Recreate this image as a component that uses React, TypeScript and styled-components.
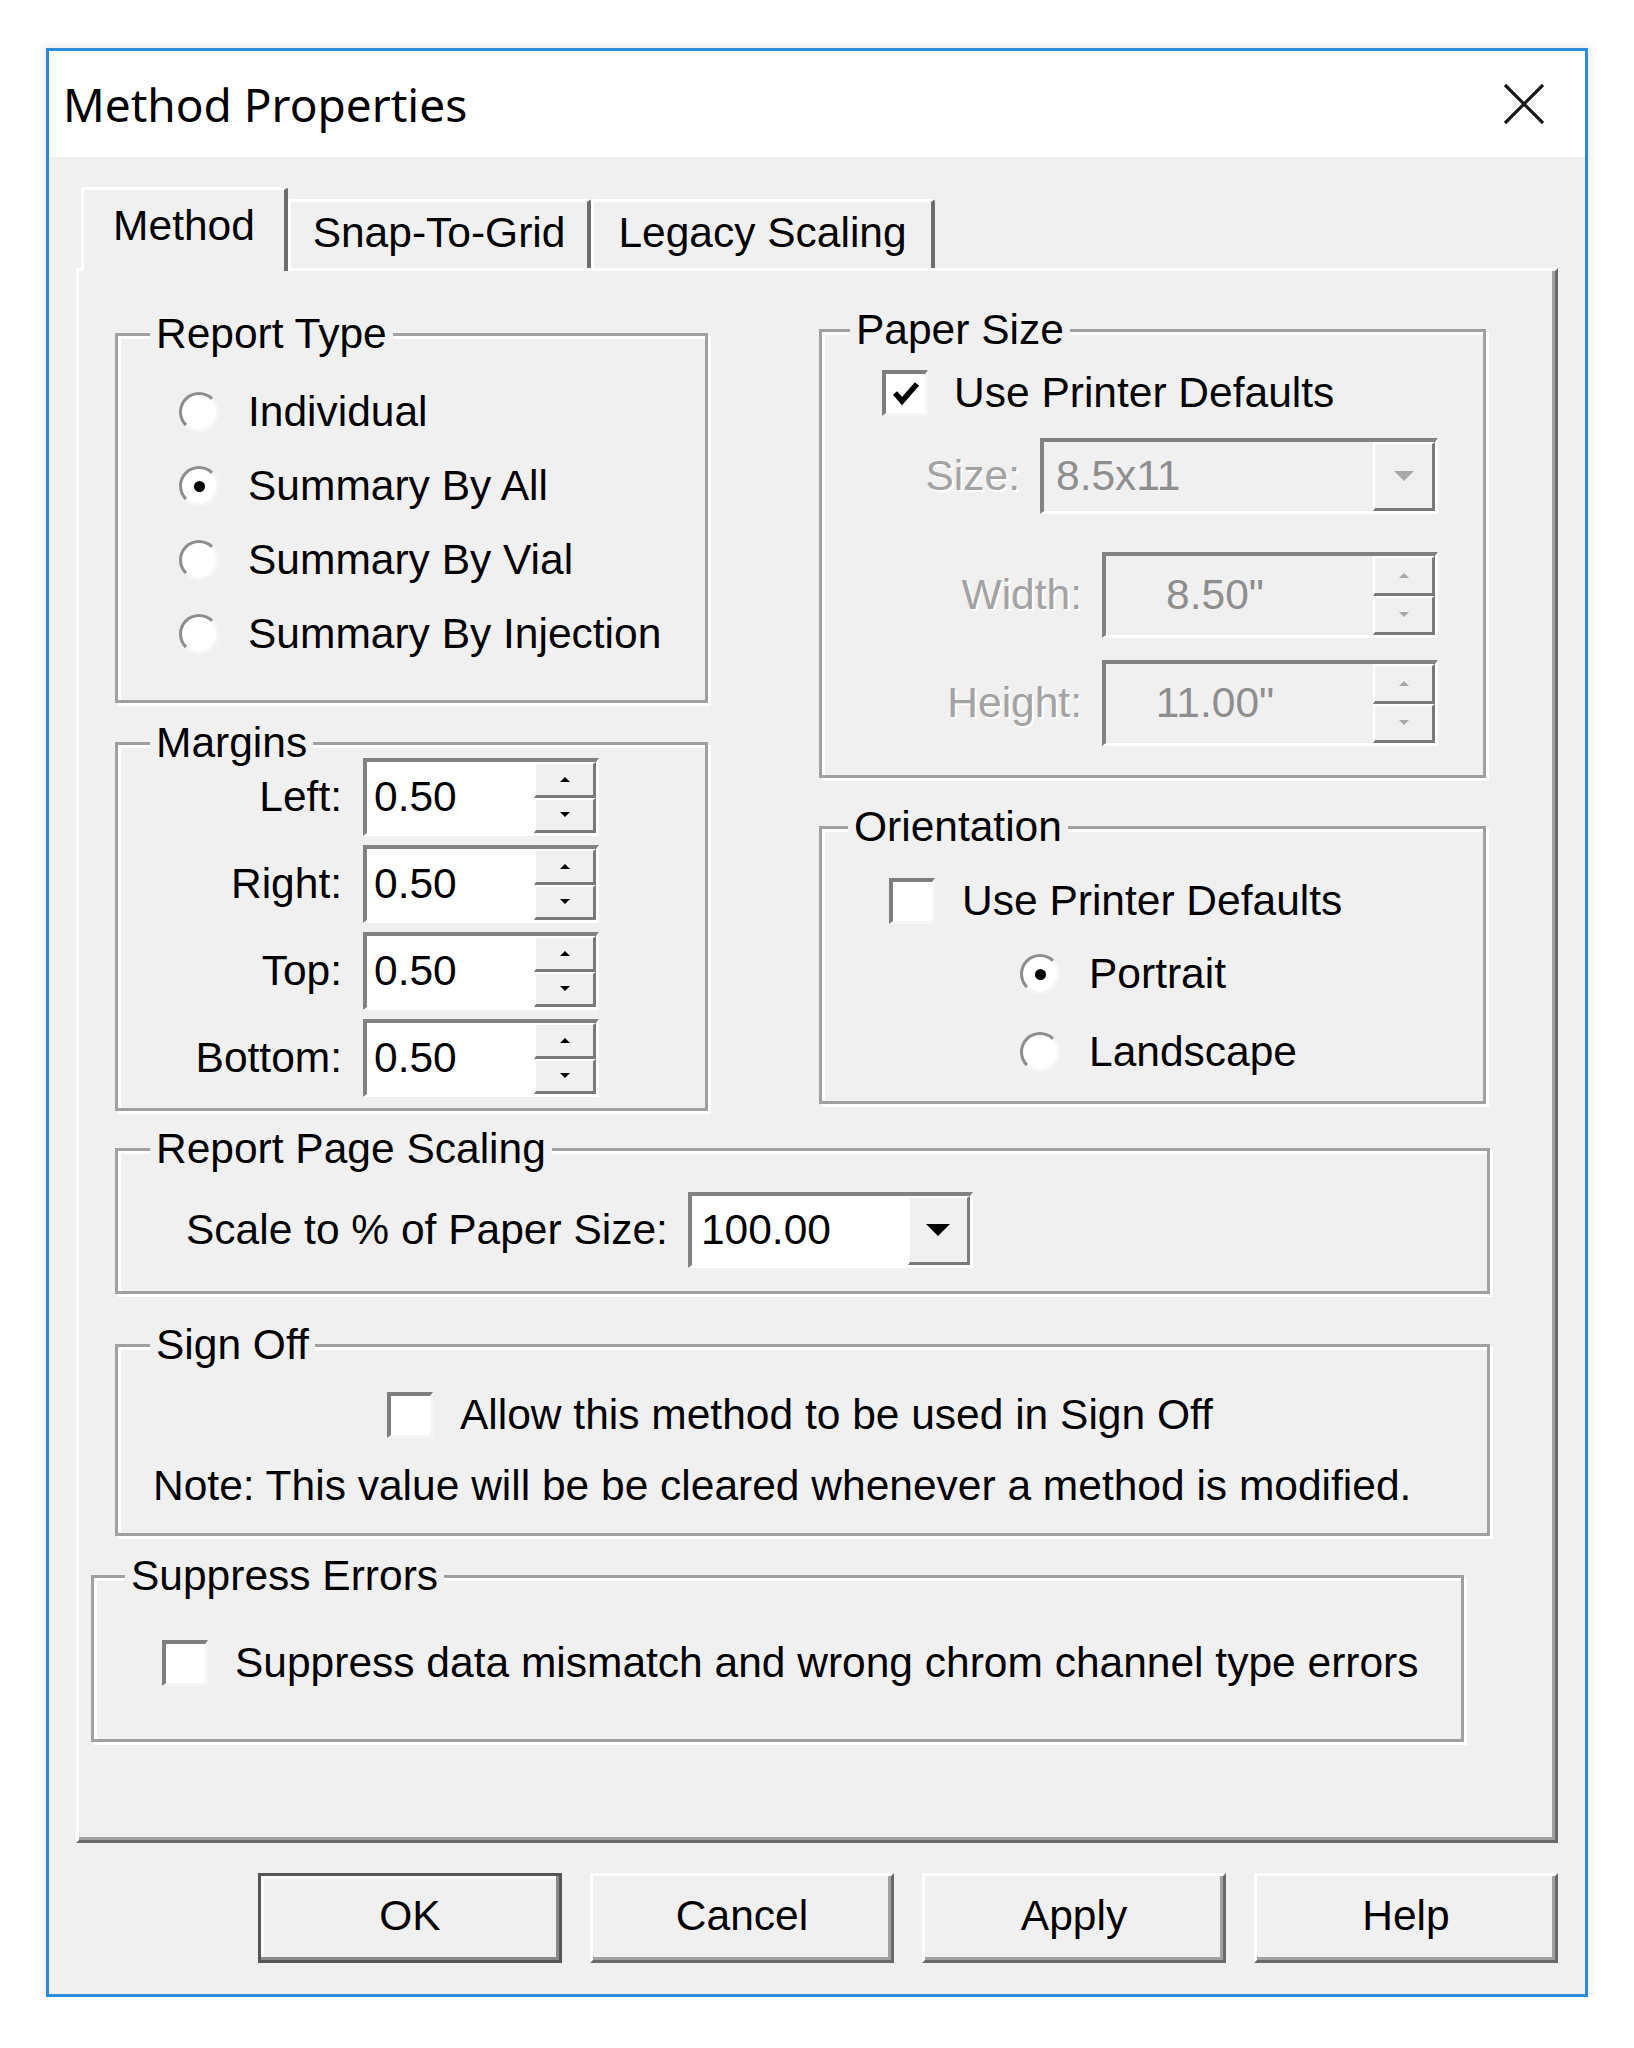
import styled, { createGlobalStyle, css } from "styled-components";

const GlobalStyle = createGlobalStyle`
  html, body {
    margin: 0;
    background: #fff;
  }
  body {
    font-family: "Liberation Sans", Arial, sans-serif;
    color: #000;
  }
`;

const Page = styled.div`
  padding: 48px 0 0 46px;
`;

const Dialog = styled.div`
  box-sizing: border-box;
  width: 1542px;
  height: 1949px;
  border: 3px solid #2b8bd8;
  background: #f0f0f0;
  box-shadow: 0 0 8px 3px rgba(0, 0, 0, 0.07);
  display: flex;
  flex-direction: column;
`;

const TitleBar = styled.div`
  flex: none;
  height: 106px;
  background: #fff;
  display: flex;
  align-items: center;
  justify-content: space-between;
  padding: 0 40px 0 14px;
`;

const Title = styled.div`
  font-family: "Noto Sans", "Liberation Sans", sans-serif;
  font-size: 46px;
  line-height: 1;
  color: #000;
`;

const Body = styled.div`
  padding: 30px 27px 0;
  font-size: 42.5px;
`;

const TabStrip = styled.div`
  display: flex;
  align-items: flex-end;
  height: 81px;
  padding-left: 5px;
`;

const Tab = styled.div<{ $active?: boolean; $w: number }>`
  box-sizing: border-box;
  position: relative;
  z-index: 1;
  width: ${(p) => p.$w}px;
  height: ${(p) => (p.$active ? 84 : 69)}px;
  margin-bottom: ${(p) => (p.$active ? -3 : 0)}px;
  padding-bottom: ${(p) => (p.$active ? 8 : 4)}px;
  display: flex;
  align-items: center;
  justify-content: center;
  background: #f0f0f0;
  border-top: 3px solid #fff;
  border-left: 3px solid #fff;
  border-right: 4px solid #6d6d6d;
  border-radius: 3px 3px 0 0;
  line-height: 1;
  white-space: nowrap;
`;

const Panel = styled.div`
  box-sizing: border-box;
  width: 1482px;
  height: 1575px;
  border-top: 3px solid #fff;
  border-left: 3px solid #fff;
  border-right: 3px solid #696969;
  border-bottom: 3px solid #696969;
  box-shadow: inset -3px -3px 0 #a0a0a0;
  padding: 58px 0 0 36px;
  display: flex;
  flex-direction: column;
`;

const TopSection = styled.div`
  display: flex;
  align-items: flex-start;
  gap: 111px;
`;

const Column = styled.div`
  display: flex;
  flex-direction: column;
`;

const Frame = styled.div<{ $w: number; $h: number; $mt?: number; $ml?: number }>`
  box-sizing: border-box;
  position: relative;
  width: ${(p) => p.$w}px;
  height: ${(p) => p.$h}px;
  margin-top: ${(p) => p.$mt ?? 0}px;
  margin-left: ${(p) => p.$ml ?? 0}px;
  border: 3px solid #a0a0a0;
  box-shadow: inset 3px 3px 0 #fff, 3px 3px 0 #fff;
  display: flex;
  flex-direction: column;
  align-items: flex-start;
`;

const Caption = styled.span<{ $left?: number }>`
  position: absolute;
  top: -26px;
  left: ${(p) => p.$left ?? 30}px;
  padding: 0 6px;
  background: #f0f0f0;
  line-height: 48px;
  white-space: nowrap;
`;

const Row = styled.div<{ $mt?: number; $ml?: number; $h?: number; $gap?: number }>`
  display: flex;
  align-items: center;
  margin-top: ${(p) => p.$mt ?? 0}px;
  margin-left: ${(p) => p.$ml ?? 0}px;
  height: ${(p) => p.$h ?? 46}px;
  gap: ${(p) => p.$gap ?? 27}px;
`;

const Label = styled.span<{ $disabled?: boolean; $w?: number }>`
  line-height: 1;
  white-space: nowrap;
  color: ${(p) => (p.$disabled ? "#a3a3a3" : "#000")};
  ${(p) =>
    p.$disabled &&
    css`
      text-shadow: 2px 2px 0 #fff;
    `}
  ${(p) =>
    p.$w !== undefined &&
    css`
      flex: none;
      width: ${p.$w}px;
      text-align: right;
    `}
`;

const Note = styled.div<{ $mt: number; $ml: number }>`
  margin-top: ${(p) => p.$mt}px;
  margin-left: ${(p) => p.$ml}px;
  line-height: 48px;
  white-space: nowrap;
`;

const Radio = styled.span<{ $on?: boolean }>`
  box-sizing: border-box;
  position: relative;
  flex: none;
  width: 40px;
  height: 40px;
  border-radius: 50%;
  background: #fff;
  border: 3px solid;
  border-color: #8d8d8d #f6f6f6 #f6f6f6 #8d8d8d;
  ${(p) =>
    p.$on &&
    css`
      &::after {
        content: "";
        position: absolute;
        left: 50%;
        top: 50%;
        width: 11px;
        height: 11px;
        margin: -5.5px 0 0 -5.5px;
        border-radius: 50%;
        background: #000;
      }
    `}
`;

const Box = styled.span`
  box-sizing: border-box;
  flex: none;
  width: 46px;
  height: 46px;
  background: #fff;
  border-style: solid;
  border-width: 4px 3px 3px 4px;
  border-color: #7e7e7e #f6f6f6 #f6f6f6 #7e7e7e;
  display: flex;
  align-items: center;
  justify-content: center;
`;

const Sunken = styled.div<{ $w: number; $h: number; $disabled?: boolean }>`
  box-sizing: border-box;
  flex: none;
  display: flex;
  width: ${(p) => p.$w}px;
  height: ${(p) => p.$h}px;
  border-style: solid;
  border-width: 4px 3px 3px 4px;
  border-color: #828282 #fff #fff #828282;
  background: ${(p) => (p.$disabled ? "#f0f0f0" : "#fff")};
`;

const FieldText = styled.span<{ $disabled?: boolean; $pl?: number; $center?: boolean }>`
  flex: 1;
  display: flex;
  align-items: center;
  justify-content: ${(p) => (p.$center ? "center" : "flex-start")};
  padding-left: ${(p) => p.$pl ?? 7}px;
  padding-right: ${(p) => (p.$center ? 56 : 0)}px;
  line-height: 1;
  color: ${(p) => (p.$disabled ? "#8e8e8e" : "#000")};
`;

const SpinCol = styled.span`
  flex: none;
  width: 62px;
  display: flex;
  flex-direction: column;
`;

const Raised = styled.span`
  box-sizing: border-box;
  flex: 1;
  display: flex;
  align-items: center;
  justify-content: center;
  background: #f0f0f0;
  border-style: solid;
  border-width: 2px 3px 3px 2px;
  border-color: #fff #7a7a7a #7a7a7a #fff;
`;

const DropButton = styled(Raised)`
  flex: none;
  width: 62px;
`;

const Arrow = styled.span<{ $up?: boolean; $size: number; $color: string }>`
  width: 0;
  height: 0;
  border-left: ${(p) => p.$size}px solid transparent;
  border-right: ${(p) => p.$size}px solid transparent;
  ${(p) =>
    p.$up
      ? css`
          border-bottom: ${p.$size}px solid ${p.$color};
        `
      : css`
          border-top: ${p.$size}px solid ${p.$color};
        `}
`;

const ButtonRow = styled.div`
  display: flex;
  justify-content: flex-end;
  gap: 28px;
  width: 1482px;
  margin-top: 30px;
`;

const Button = styled.button<{ $default?: boolean }>`
  box-sizing: border-box;
  width: 304px;
  height: 90px;
  padding: 0 0 4px;
  font: inherit;
  color: #000;
  background: #f0f0f0;
  border: 3px solid;
  border-color: #fff #696969 #696969 #fff;
  box-shadow: inset -3px -3px 0 #a0a0a0;
  ${(p) =>
    p.$default &&
    css`
      border-color: #555;
      box-shadow: inset -3px -3px 0 #8a8a8a, inset 3px 3px 0 #fff;
    `}
`;

function CloseIcon() {
  return (
    <svg width="42" height="42" viewBox="0 0 42 42">
      <path d="M2 2L40 40M40 2L2 40" stroke="#1a1a1a" strokeWidth="3.2" />
    </svg>
  );
}

function CheckMark() {
  return (
    <svg width="30" height="30" viewBox="0 0 30 30">
      <path d="M4 14 L11 22 L26 5" fill="none" stroke="#000" strokeWidth="5.5" />
    </svg>
  );
}

function CheckBox({ on }: { on?: boolean }) {
  return <Box>{on && <CheckMark />}</Box>;
}

function Spin({ disabled }: { disabled?: boolean }) {
  const c = disabled ? "#a8a8a8" : "#000";
  return (
    <SpinCol>
      <Raised>
        <Arrow $up $size={5} $color={c} />
      </Raised>
      <Raised>
        <Arrow $size={5} $color={c} />
      </Raised>
    </SpinCol>
  );
}

function MarginField({ label }: { label: string }) {
  return (
    <Row $h={78} $gap={21} $mt={9}>
      <Label $w={224}>{label}</Label>
      <Sunken $w={236} $h={78}>
        <FieldText>0.50</FieldText>
        <Spin />
      </Sunken>
    </Row>
  );
}

export default function App() {
  return (
    <Page>
      <GlobalStyle />
      <Dialog>
        <TitleBar>
          <Title>Method Properties</Title>
          <CloseIcon />
        </TitleBar>
        <Body>
          <TabStrip>
            <Tab $active $w={207}>Method</Tab>
            <Tab $w={303}>Snap-To-Grid</Tab>
            <Tab $w={344}>Legacy Scaling</Tab>
          </TabStrip>
          <Panel>
            <TopSection>
              <Column>
                <Frame $w={593} $h={370} $mt={4}>
                  <Caption $left={32}>Report Type</Caption>
                  <Row $h={74} $gap={29} $mt={39} $ml={61}>
                    <Radio />
                    <Label>Individual</Label>
                  </Row>
                  <Row $h={74} $gap={29} $ml={61}>
                    <Radio $on />
                    <Label>Summary By All</Label>
                  </Row>
                  <Row $h={74} $gap={29} $ml={61}>
                    <Radio />
                    <Label>Summary By Vial</Label>
                  </Row>
                  <Row $h={74} $gap={29} $ml={61}>
                    <Radio />
                    <Label>Summary By Injection</Label>
                  </Row>
                </Frame>
                <Frame $w={593} $h={369} $mt={39}>
                  <Caption $left={32}>Margins</Caption>
                  <div style={{ height: 4 }} />
                  <MarginField label="Left:" />
                  <MarginField label="Right:" />
                  <MarginField label="Top:" />
                  <MarginField label="Bottom:" />
                </Frame>
              </Column>
              <Column>
                <Frame $w={667} $h={449}>
                  <Caption $left={28}>Paper Size</Caption>
                  <Row $mt={38} $ml={60} $gap={26}>
                    <CheckBox on />
                    <Label>Use Printer Defaults</Label>
                  </Row>
                  <Row $mt={22} $h={76} $gap={20}>
                    <Label $w={198} $disabled>
                      Size:
                    </Label>
                    <Sunken $w={398} $h={76} $disabled>
                      <FieldText $disabled $pl={12}>
                        8.5x11
                      </FieldText>
                      <DropButton>
                        <Arrow $size={10} $color="#a8a8a8" />
                      </DropButton>
                    </Sunken>
                  </Row>
                  <Row $mt={38} $h={86} $gap={20}>
                    <Label $w={260} $disabled>
                      Width:
                    </Label>
                    <Sunken $w={336} $h={86} $disabled>
                      <FieldText $disabled $center>
                        8.50"
                      </FieldText>
                      <Spin disabled />
                    </Sunken>
                  </Row>
                  <Row $mt={22} $h={86} $gap={20}>
                    <Label $w={260} $disabled>
                      Height:
                    </Label>
                    <Sunken $w={336} $h={86} $disabled>
                      <FieldText $disabled $center>
                        11.00"
                      </FieldText>
                      <Spin disabled />
                    </Sunken>
                  </Row>
                </Frame>
                <Frame $w={667} $h={278} $mt={48}>
                  <Caption $left={26}>Orientation</Caption>
                  <Row $mt={49} $ml={67}>
                    <CheckBox />
                    <Label>Use Printer Defaults</Label>
                  </Row>
                  <Row $mt={11} $ml={198} $h={78} $gap={29}>
                    <Radio $on />
                    <Label>Portrait</Label>
                  </Row>
                  <Row $ml={198} $h={78} $gap={29}>
                    <Radio />
                    <Label>Landscape</Label>
                  </Row>
                </Frame>
              </Column>
            </TopSection>
            <Frame $w={1375} $h={146} $mt={37}>
              <Caption $left={32}>Report Page Scaling</Caption>
              <Row $mt={41} $ml={68} $h={76} $gap={20}>
                <Label>Scale to % of Paper Size:</Label>
                <Sunken $w={285} $h={76}>
                  <FieldText $pl={9}>100.00</FieldText>
                  <DropButton>
                    <Arrow $size={12} $color="#000" />
                  </DropButton>
                </Sunken>
              </Row>
            </Frame>
            <Frame $w={1375} $h={192} $mt={50}>
              <Caption $left={32}>Sign Off</Caption>
              <Row $mt={45} $ml={269}>
                <CheckBox />
                <Label>Allow this method to be used in Sign Off</Label>
              </Row>
              <Note $mt={24} $ml={35}>
                Note: This value will be be cleared whenever a method is modified.
              </Note>
            </Frame>
            <Frame $w={1373} $h={167} $mt={39} $ml={-24}>
              <Caption $left={31}>Suppress Errors</Caption>
              <Row $mt={62} $ml={68}>
                <CheckBox />
                <Label>Suppress data mismatch and wrong chrom channel type errors</Label>
              </Row>
            </Frame>
          </Panel>
          <ButtonRow>
            <Button $default>OK</Button>
            <Button>Cancel</Button>
            <Button>Apply</Button>
            <Button>Help</Button>
          </ButtonRow>
        </Body>
      </Dialog>
    </Page>
  );
}
